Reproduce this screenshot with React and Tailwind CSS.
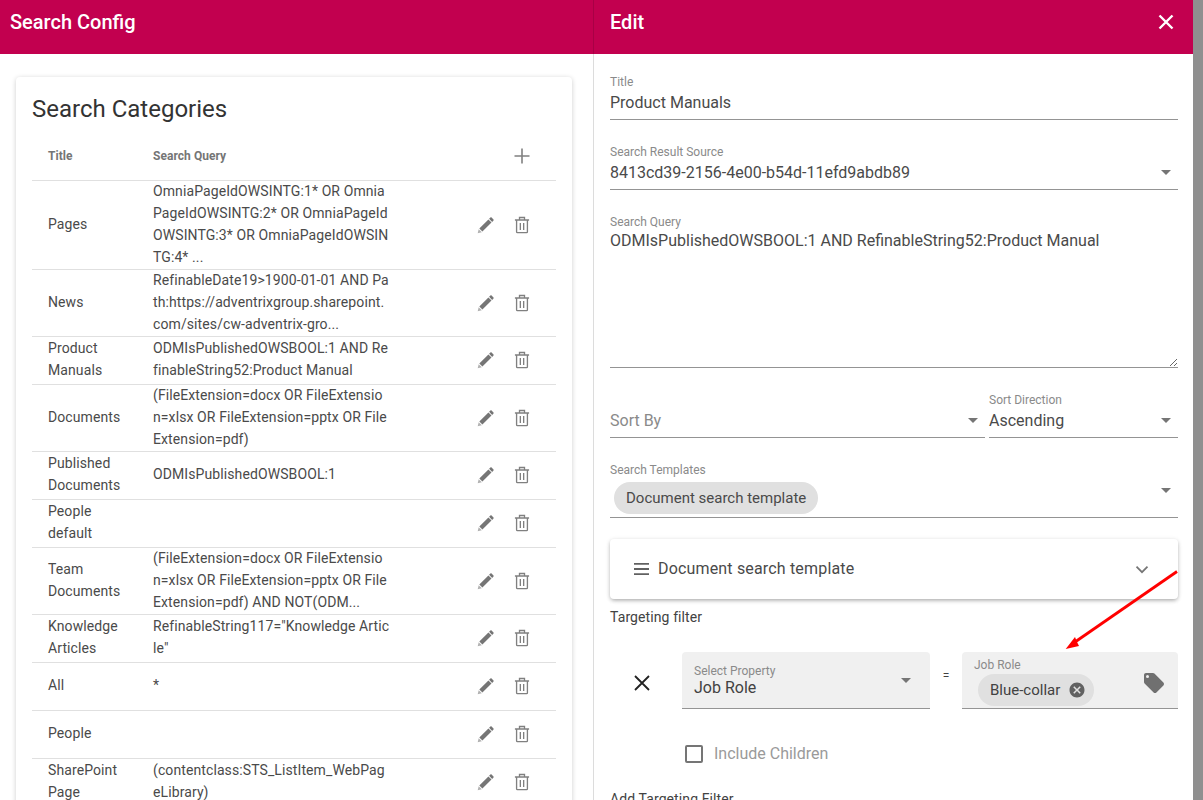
const rows = [
  { title: 'Pages', query: 'OmniaPageIdOWSINTG:1* OR Omnia\nPageIdOWSINTG:2* OR OmniaPageId\nOWSINTG:3* OR OmniaPageIdOWSIN\nTG:4* ...' },
  { title: 'News', query: 'RefinableDate19>1900-01-01 AND Pa\nth:https://adventrixgroup.sharepoint.\ncom/sites/cw-adventrix-gro...' },
  { title: 'Product Manuals', query: 'ODMIsPublishedOWSBOOL:1 AND Re\nfinableString52:Product Manual' },
  { title: 'Documents', query: '(FileExtension=docx OR FileExtensio\nn=xlsx OR FileExtension=pptx OR File\nExtension=pdf)' },
  { title: 'Published Documents', query: 'ODMIsPublishedOWSBOOL:1' },
  { title: 'People default', query: '' },
  { title: 'Team Documents', query: '(FileExtension=docx OR FileExtensio\nn=xlsx OR FileExtension=pptx OR File\nExtension=pdf) AND NOT(ODM...' },
  { title: 'Knowledge Articles', query: 'RefinableString117="Knowledge Artic\nle"' },
  { title: 'All', query: '*' },
  { title: 'People', query: '' },
  { title: 'SharePoint Page', query: '(contentclass:STS_ListItem_WebPag\neLibrary)' },
];

const Caret = () => <span className="w-0 h-0 border-x-[5px] border-x-transparent border-t-[5px] border-t-[#757575]" />;

const PencilIcon = () => (
  <svg viewBox="0 0 24 24" className="w-[20px] h-[20px]">
    <path className="fill-[#757575]" d="M21 6.7c.4-.4.4-1 0-1.4l-2.3-2.3c-.4-.4-1-.4-1.4 0l-1.6 1.6 3.7 3.7L21 6.7zM14.9 5.3L4 16.2l3.7 3.7L18.6 9 14.9 5.3z" />
    <path className="fill-[#b0b0b0]" d="M3.2 17L2 22l5-1.2L3.2 17z" />
  </svg>
);

const TrashIcon = () => (
  <svg viewBox="0 0 24 24" className="w-[20px] h-[20px] fill-none stroke-[#808080] stroke-[1.6]">
    <path d="M3.5 6h17M9 6V3h6v3M5.5 6v14.2c0 .6.4 1 1 1h11c.6 0 1-.4 1-1V6M10 9.5v8.5M14 9.5v8.5" />
  </svg>
);

const Row = ({ title, query }) => {
  // rows of three lines and more have no spare height, the shorter ones sit on a half pixel
  const tall = query.split('\n').length >= 3;
  const textShift = tall ? '-translate-y-px' : '-translate-y-[2px]';
  return (
    <div className="flex items-center min-h-[48px] border-b border-[#e0e0e0] text-[#4a4a4a] tracking-[0.1px]">
      <div className={`w-[121px] pl-4 pr-6 shrink-0 ${textShift}`}>{title}</div>
      <div className={`flex-1 whitespace-pre-line ${textShift}`}>{query}</div>
      <div className={`flex items-center w-[72px] mr-4 ${tall ? '' : '-translate-y-px'}`}>
        <span className="w-9 flex justify-center"><PencilIcon /></span>
        <span className="w-9 flex justify-center"><TrashIcon /></span>
      </div>
    </div>
  );
};

const Header = ({ children, className = '' }) => (
  <div className={`h-[54px] bg-[#c2004f] text-white text-[20px] font-medium flex items-center pb-[10px] relative ${className}`}>
    {children}
  </div>
);

const Label = ({ children }) => <div className="text-xs leading-4 text-[#8a8a8a]">{children}</div>;

const Field = ({ label, value, muted }) => (
  <div className="flex-1 min-w-0 border-b border-[#949494] pb-[5px]">
    <Label>{label || '\u00a0'}</Label>
    <div className="flex items-center justify-between h-6 pt-px">
      <span className={`text-base ${muted ? 'text-[#8a8a8a]' : 'text-[#4a4a4a]'}`}>{value}</span>
      {value !== 'Product Manuals' && <span className="flex mr-[7px]"><Caret /></span>}
    </div>
  </div>
);

export default function App() {
  return (
    <div className="relative flex h-[800px] overflow-hidden bg-white font-['Roboto',sans-serif] text-sm leading-[22px] text-[#424242]">
      {/* Left panel */}
      <div className="w-[593px] shrink-0">
        <Header><span className="pl-[10px]">Search Config</span></Header>
        <div className="mt-[23px] ml-4 w-[556px] bg-white rounded shadow-[0_1px_5px_rgba(0,0,0,0.2)] px-4 pt-4">
          <h2 className="text-2xl leading-8 text-[#333] mb-[7px]">Search Categories</h2>
          <div className="flex items-center h-[49px] border-b border-[#e0e0e0] text-xs font-bold text-[#757575] tracking-[0.05px]">
            <div className="w-[121px] pl-4 shrink-0">Title</div>
            <div className="flex-1">Search Query</div>
            <div className="w-9 mr-4 flex justify-center">
              <svg viewBox="0 0 24 24" className="w-6 h-6 fill-none stroke-[#808080] stroke-[1.6]"><path d="M12 4.5v15M4.5 12h15" /></svg>
            </div>
          </div>
          {rows.map((row) => <Row key={row.title} {...row} />)}
        </div>
      </div>

      {/* Edit panel */}
      <div className="w-[600px] shrink-0 border-l border-[#dcdcdc] relative">
        <Header className="-ml-px border-l border-[#a80045]">
          <span className="pl-4">Edit</span>
          <svg viewBox="0 0 24 24" className="absolute left-[560px] top-[10px] w-6 h-6 fill-none stroke-white stroke-[2.4]"><path d="M5.5 5.5l13 13M18.5 5.5l-13 13" /></svg>
        </Header>
        <div className="pl-4 pr-[15px] pt-5">
          <div className="flex"><Field label="Title" value="Product Manuals" /></div>
          <div className="flex mt-6"><Field label="Search Result Source" value="8413cd39-2156-4e00-b54d-11efd9abdb89" /></div>
          <div className="mt-6 border-b border-[#949494]">
            <Label>Search Query</Label>
            <textarea
              readOnly
              className="block w-full h-[138px] -mt-px text-base leading-6 text-[#4a4a4a] outline-none"
              defaultValue="ODMIsPublishedOWSBOOL:1 AND RefinableString52:Product Manual"
            />
          </div>
          <div className="flex gap-1 mt-6">
            <Field value="Sort By" muted />
            <div className="w-[189px] shrink-0 flex"><Field label="Sort Direction" value="Ascending" /></div>
          </div>
          <div className="mt-6 border-b border-[#949494] pb-[3px]">
            <Label>Search Templates</Label>
            <div className="flex justify-between pt-1">
              <span className="h-8 ml-1 px-3 rounded-full bg-[#e0e0e0] text-[15px] text-[#4a4a4a] flex items-center">Document search template</span>
              <span className="flex mr-[7px] mt-[6px] h-[5px]"><Caret /></span>
            </div>
          </div>
          <div className="mt-[21px] h-[60px] bg-white rounded-sm shadow-[0_2px_4px_-1px_rgba(0,0,0,0.3),0_1px_5px_rgba(0,0,0,0.12)] flex items-center pl-6 pr-[25px]">
            <svg viewBox="0 0 15 12" className="w-[15px] h-3 fill-[#616161] mr-[9px]"><path d="M0 0h15v1.8H0zM0 5.1h15v1.8H0zM0 10.2h15V12H0z" /></svg>
            <span className="flex-1 text-base tracking-[0.17px] text-[#4a4a4a]">Document search template</span>
            <svg viewBox="0 0 24 24" className="w-[22px] h-[22px] fill-none stroke-[#757575] stroke-[1.9]"><path d="M6 9.5l6 6 6-6" /></svg>
          </div>
          <div className="mt-[7px] tracking-[0.1px]">Targeting filter</div>
          <div className="flex mt-6 h-[57px]">
            <div className="w-[72px] shrink-0 pl-[20px] pt-[19px]">
              <svg viewBox="0 0 24 24" className="w-6 h-6 fill-none stroke-[#222] stroke-[1.8]"><path d="M5 5l14 14M19 5L5 19" /></svg>
            </div>
            <div className="w-[248px] shrink-0 bg-[#f0f0f0] rounded-t border-b border-[#949494] pl-3 pr-[19px] pt-[11px] flex justify-between">
              <div>
                <Label>Select Property</Label>
                <div className="text-base leading-[18px] text-[#424242]">Job Role</div>
              </div>
              <span className="flex mt-[15px] h-[5px]"><Caret /></span>
            </div>
            <div className="w-8 shrink-0 text-center text-xs pt-4">=</div>
            <div className="flex-1 bg-[#f0f0f0] rounded-t border-b border-[#949494] pl-3 pt-[5px] relative">
              <Label>Job Role</Label>
              <span className="inline-flex h-8 ml-1 pl-3 pr-2 rounded-full bg-[#e0e0e0] text-[15px] text-[#424242] items-center mt-px">
                Blue-collar
                <svg viewBox="0 0 24 24" className="w-[18px] h-[18px] fill-[#616161] ml-2"><path d="M12,2C17.53,2 22,6.47 22,12C22,17.53 17.53,22 12,22C6.47,22 2,17.53 2,12C2,6.47 6.47,2 12,2M15.59,7L12,10.59L8.41,7L7,8.41L10.59,12L7,15.59L8.41,17L12,13.41L15.59,17L17,15.59L13.41,12L17,8.41L15.59,7Z" /></svg>
              </span>
              <svg viewBox="0 0 24 24" className="absolute right-3 top-[19px] w-6 h-6 fill-[#707070]"><path d="M5.5,7A1.5,1.5 0 0,1 4,5.5A1.5,1.5 0 0,1 5.5,4A1.5,1.5 0 0,1 7,5.5A1.5,1.5 0 0,1 5.5,7M21.41,11.58L12.41,2.58C12.05,2.22 11.55,2 11,2H4C2.89,2 2,2.89 2,4V11C2,11.55 2.22,12.05 2.59,12.41L11.59,21.41C11.95,21.77 12.45,22 13,22C13.55,22 14.05,21.77 14.41,21.41L21.41,14.41C21.78,14.05 22,13.55 22,13C22,12.44 21.77,11.94 21.41,11.58Z" /></svg>
            </div>
          </div>
          <div className="flex items-center mt-[33px] ml-[75px] text-base text-[#9a9a9a]">
            <span className="w-[18px] h-[18px] border-2 border-[#757575] rounded-[2px] mr-[11px]" />
            Include Children
          </div>
          <div className="mt-[22px] text-[#424242] tracking-[0.1px]">Add Targeting Filter</div>
        </div>
      </div>

      <div className="flex-1 bg-[#8f8f8f]" />

      {/* Red annotation arrow */}
      <svg className="absolute left-[1060px] top-[565px] w-[120px] h-[90px] pointer-events-none" viewBox="0 0 120 90">
        <path d="M117 6.5L15 77" className="stroke-[#f00] stroke-[2.8] fill-none" />
        <path d="M5.7 84L15 72L17 77L19 81Z" className="fill-[#f00]" />
      </svg>
    </div>
  );
}
